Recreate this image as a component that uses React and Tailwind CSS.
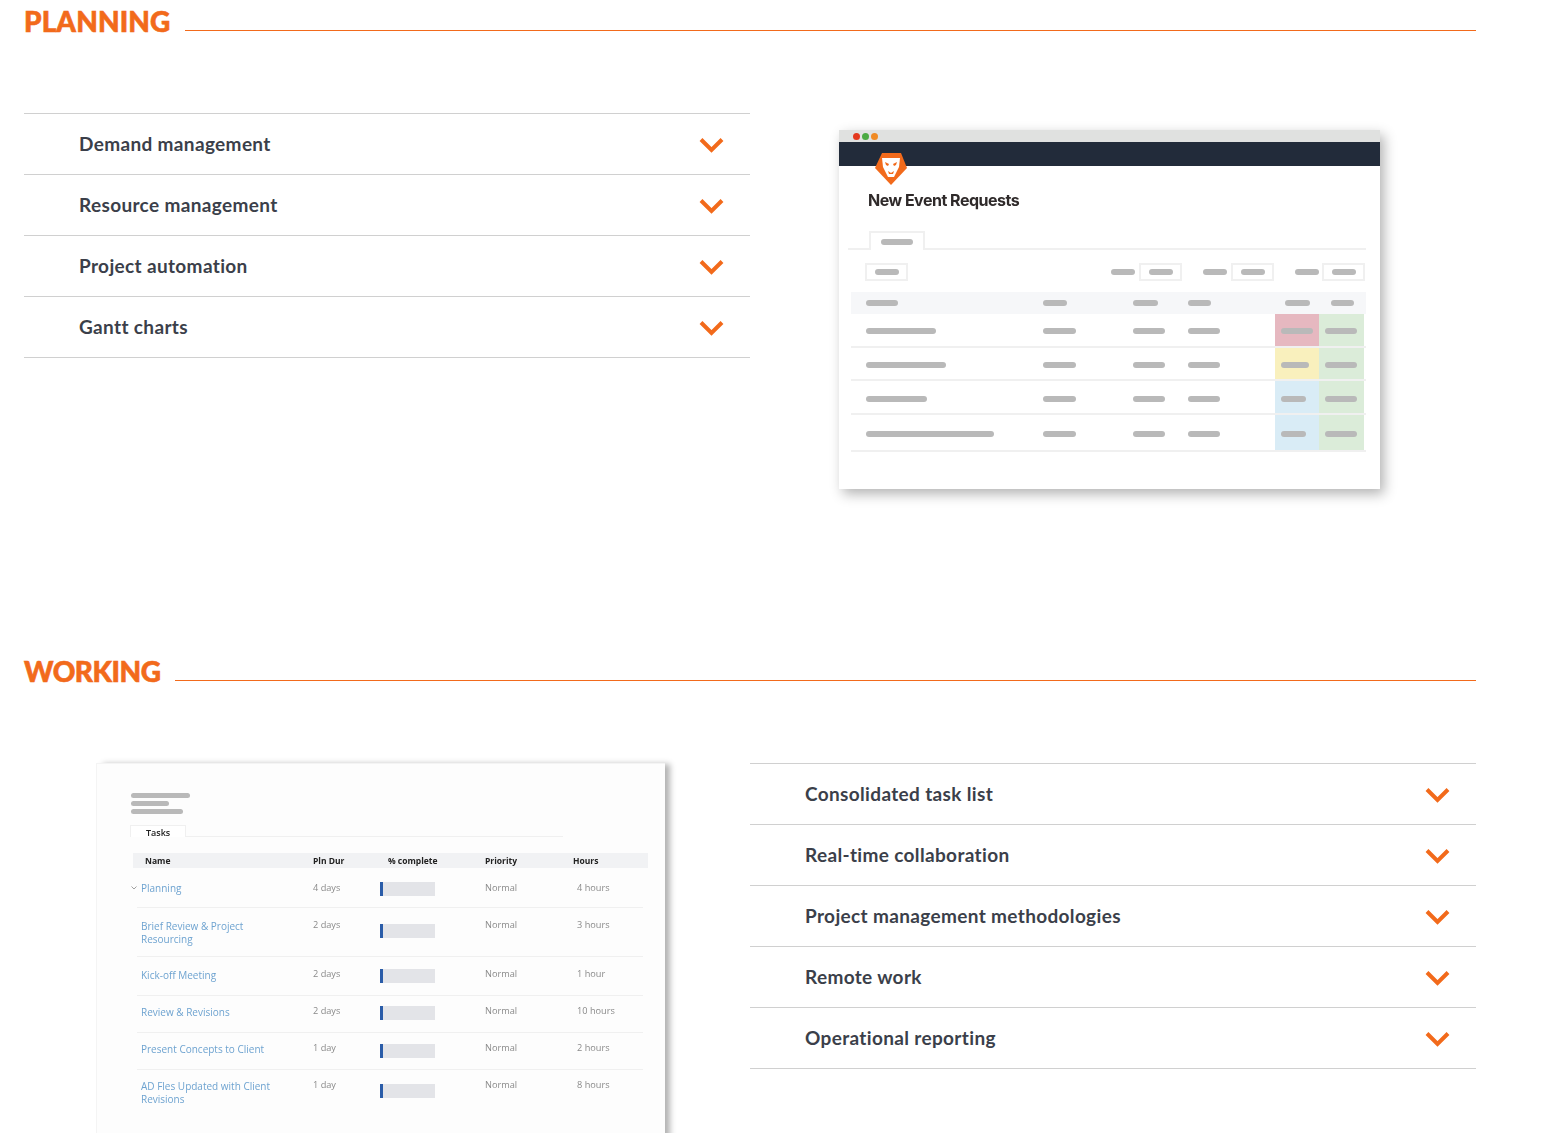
const rows1 = [
  { h: 'h-[34px]', name: 'w-[70px]', a: 'bg-[#e6b8c0]', aw: 'w-[32px]', pt: 'pt-[14px]' },
  { h: 'h-[33px]', name: 'w-[80px]', a: 'bg-[#f9f0bd]', aw: 'w-[28px]', pt: 'pt-[14px]' },
  { h: 'h-[34px]', name: 'w-[61px]', a: 'bg-[#d9ecf6]', aw: 'w-[25px]', pt: 'pt-[15px]' },
  { h: 'h-[37px]', name: 'w-[128px]', a: 'bg-[#d9ecf6]', aw: 'w-[25px]', pt: 'pt-[16px]' },
]

const tasks = [
  { name: 'Planning', dur: '4 days', hours: '4 hours', h: 'h-[40px]', pt: 'pt-[14px]', bar: 'mt-0', first: true },
  { name: 'Brief Review & Project Resourcing', dur: '2 days', hours: '3 hours', h: 'h-[49px]', pt: 'pt-[11px]', bar: 'mt-[5px]' },
  { name: 'Kick-off Meeting', dur: '2 days', hours: '1 hour', h: 'h-[39px]', pt: 'pt-[11px]', bar: 'mt-[1px]' },
  { name: 'Review & Revisions', dur: '2 days', hours: '10 hours', h: 'h-[37px]', pt: 'pt-[9px]', bar: 'mt-[1px]' },
  { name: 'Present Concepts to Client', dur: '1 day', hours: '2 hours', h: 'h-[37px]', pt: 'pt-[9px]', bar: 'mt-[2px]' },
  { name: 'AD Fles Updated with Client Revisions', dur: '1 day', hours: '8 hours', h: 'h-[64px]', pt: 'pt-[9px]', bar: 'mt-[5px]', last: true },
]

function Pill({ className }) {
  return <div className={'h-[6px] rounded-full bg-[#b9b9b9] ' + className} />
}

function Chevron() {
  return (
    <svg className="mt-[2px]" width="25" height="16" viewBox="0 0 25 16" fill="none">
      <path d="M2 2.5 L12.5 13 L23 2.5" stroke="#f26a1b" strokeWidth="4" />
    </svg>
  )
}

function SectionTitle({ title, spacing }) {
  return (
    <div className="flex items-start">
      <h2 className={'text-[28px] leading-[40px] font-black text-[#f26a1b] [-webkit-text-stroke:0.6px_#f26a1b] ' + spacing}>{title}</h2>
      <div className="flex-1 h-px bg-[#f26a1b] mt-[29px] ml-[15px]" />
    </div>
  )
}

function Accordion({ items }) {
  return (
    <div className="border-t border-[#d0d0d0]">
      {items.map(item => (
        <div key={item} className="h-[61px] border-b border-[#d0d0d0] flex items-center justify-between pl-[55px] pr-[26px]">
          <span className="text-[19px] font-bold text-[#3b3f4a] tracking-[0.35px]">{item}</span>
          <Chevron />
        </div>
      ))}
    </div>
  )
}

function LionLogo() {
  return (
    <svg className="absolute left-[36px] top-[22px]" width="32" height="33" viewBox="0 0 32 33">
      <path d="M7 1 H26 L32 16 L16 33 L0 16 Z" fill="#f26a1b" />
      <path d="M7 6 H25 L24 15 L21 21 L19 25 H13 L11 21 L8 15 Z" fill="#fff" />
      <path d="M10 10 L14 12 L13 14 L11 13 Z M22 10 L18 12 L19 14 L21 13 Z M13 19 L16 21 L19 19 L18 22 L14 22 Z" fill="#f26a1b" />
    </svg>
  )
}

function EventCard() {
  return (
    <div className="relative ml-[89px] mt-[17px] w-[541px] h-[359px] bg-white shadow-[4px_5px_12px_rgba(0,0,0,0.3)] blur-[0.4px]">
      <div className="h-[12px] bg-[#e0e1e0] flex items-center gap-[2px] pl-[14px]">
        <span className="w-[7px] h-[7px] rounded-full bg-[#e4381e]" />
        <span className="w-[7px] h-[7px] rounded-full bg-[#4aaa42]" />
        <span className="w-[7px] h-[7px] rounded-full bg-[#f08a24]" />
      </div>
      <div className="h-[24px] bg-[#222b3a]" />
      <LionLogo />
      <div className="pl-[29px] pt-[24px] text-[16px] leading-[20px] font-bold text-[#2f2a2a] font-['Inter',sans-serif] tracking-[-0.5px]">New Event Requests</div>
      <div className="ml-[9px] mr-[14px] mt-[21px] border-b-2 border-[#f0f0f0] pl-[21px]">
        <div className="w-[56px] h-[19px] -mb-[2px] bg-white border-2 border-b-0 border-[#f0f0f0] flex items-center justify-center">
          <Pill className="w-[32px]" />
        </div>
      </div>
      <div className="mt-[13px] flex items-center pl-[26px]">
        <div className="w-[43px] h-[18px] border-2 border-[#f0f0f0] flex items-center justify-center"><Pill className="w-[24px]" /></div>
        <Pill className="w-[24px] ml-[203px]" />
        <div className="w-[43px] h-[18px] ml-[4px] border-2 border-[#f0f0f0] flex items-center justify-center"><Pill className="w-[24px]" /></div>
        <Pill className="w-[24px] ml-[21px]" />
        <div className="w-[43px] h-[18px] ml-[4px] border-2 border-[#f0f0f0] flex items-center justify-center"><Pill className="w-[24px]" /></div>
        <Pill className="w-[24px] ml-[21px]" />
        <div className="w-[43px] h-[18px] ml-[3px] border-2 border-[#f0f0f0] flex items-center justify-center"><Pill className="w-[24px]" /></div>
      </div>
      <div className="ml-[12px] w-[515px] mt-[11px]">
        <div className="h-[22px] bg-[#f6f7f9] pl-[15px] grid grid-cols-[177px_90px_55px_87px_46px_45px] items-center">
          <Pill className="w-[32px]" />
          <Pill className="w-[24px]" />
          <Pill className="w-[25px]" />
          <Pill className="w-[23px]" />
          <Pill className="w-[25px] ml-[10px]" />
          <Pill className="w-[23px] ml-[10px]" />
        </div>
        {rows1.map(r => (
          <div key={r.name} className={'border-b-2 border-[#f0f0f0] pl-[15px] pr-[2px] grid grid-cols-[177px_90px_55px_87px_44px_45px] ' + r.h}>
            <div className={r.pt}><Pill className={r.name} /></div>
            <div className={r.pt}><Pill className="w-[33px]" /></div>
            <div className={r.pt}><Pill className="w-[32px]" /></div>
            <div className={r.pt}><Pill className="w-[32px]" /></div>
            <div className={'pl-[6px] ' + r.pt + ' ' + r.a}><Pill className={r.aw} /></div>
            <div className={'pl-[6px] bg-[#dbecd9] ' + r.pt}><Pill className="w-[32px]" /></div>
          </div>
        ))}
      </div>
    </div>
  )
}

function TaskCard() {
  return (
    <div className="ml-[72px] w-[569px] h-[400px] bg-[#fdfdfd] border-l border-t border-[#f4f4f4] shadow-[6px_0_6px_-1px_rgba(0,0,0,0.3)] blur-[0.3px] font-['Open_Sans',sans-serif]">
      <div className="pl-[34px] pt-[29px] flex flex-col gap-[3px]">
        <Pill className="w-[59px] !h-[5px]" />
        <Pill className="w-[38px] !h-[5px]" />
        <Pill className="w-[52px] !h-[5px]" />
      </div>
      <div className="ml-[33px] w-[433px] mt-[11px] border-b border-[#f0f0f0]">
        <div className="w-[56px] h-[12px] -mb-px bg-white border border-b-0 border-[#f0f0f0] pl-[15px] text-[9px] leading-[14px] font-semibold text-[#222]">Tasks</div>
      </div>
      <div className="ml-[36px] w-[515px] h-[15px] mt-[16px] bg-[#f1f2f4] pl-[12px] pt-[1px] grid grid-cols-[168px_75px_97px_88px_1fr] items-center text-[8.5px] font-bold text-[#222]">
        <span>Name</span>
        <span>Pln Dur</span>
        <span>% complete</span>
        <span>Priority</span>
        <span>Hours</span>
      </div>
      <div className="relative ml-[40px] w-[506px]">
        {tasks.map(t => (
          <div key={t.name} className={'pl-[4px] grid grid-cols-[172px_67px_105px_92px_1fr] text-[9.2px] leading-[12.5px] ' + t.h + ' ' + t.pt + (t.last ? '' : ' border-b border-[#f0f0f0]')}>
            <span className={'relative text-[10px] font-medium text-[#6ea3d0] pr-[30px] ' + (t.first ? '' : 'mt-[1px]')}>
              {t.first && (
                <svg className="absolute -left-[10px] top-[4px]" width="6" height="4" viewBox="0 0 6 4" fill="none">
                  <path d="M0.5 0.5 L3 3 L5.5 0.5" stroke="#777" strokeWidth="0.7" />
                </svg>
              )}
              {t.name}
            </span>
            <span className="text-[#8a8a8a]">{t.dur}</span>
            <div className={'w-[55px] h-[14px] bg-[#e3e4e8] ' + t.bar}>
              <div className="w-[3px] h-full bg-[#2a5ca8]" />
            </div>
            <span className="text-[#8a8a8a]">Normal</span>
            <span className="text-[#8a8a8a]">{t.hours}</span>
          </div>
        ))}
      </div>
    </div>
  )
}

export default function App() {
  return (
    <div className="h-[1133px] overflow-hidden bg-white font-['Lato',sans-serif]">
      <div className="ml-6 w-[1452px] pt-px">
        <SectionTitle title="PLANNING" spacing="tracking-[0.1px]" />
        <div className="grid grid-cols-2 mt-[72px]">
          <Accordion items={['Demand management', 'Resource management', 'Project automation', 'Gantt charts']} />
          <EventCard />
        </div>
        <div className="mt-[162px]">
          <SectionTitle title="WORKING" spacing="tracking-[-0.5px]" />
        </div>
        <div className="grid grid-cols-2 mt-[72px]">
          <TaskCard />
          <Accordion items={['Consolidated task list', 'Real-time collaboration', 'Project management methodologies', 'Remote work', 'Operational reporting']} />
        </div>
      </div>
    </div>
  )
}
